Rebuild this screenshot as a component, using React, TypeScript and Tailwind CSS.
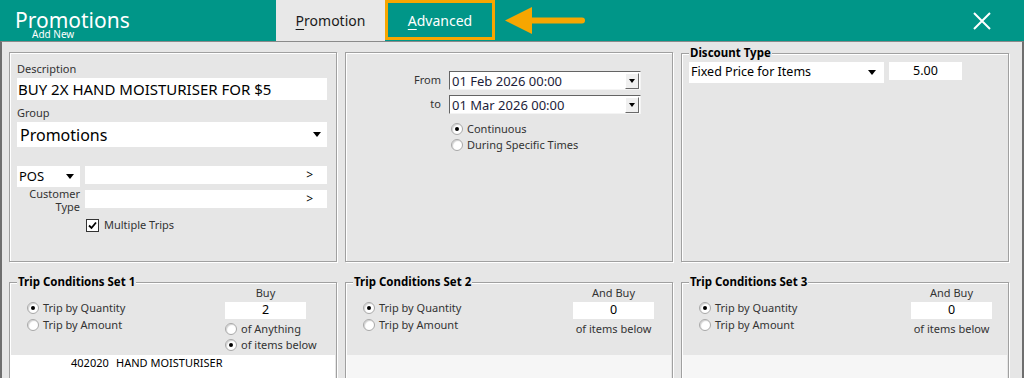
import React from 'react';

/** Classic Windows-style radio dot. */
function Radio({ on }: { on?: boolean }) {
  return (
    <span className="flex h-[12px] w-[12px] shrink-0 items-center justify-center rounded-full border border-[#a8a8a8] bg-white shadow-[inset_1px_1px_1px_rgba(0,0,0,0.18)]">
      {on && <span className="h-[4px] w-[4px] rounded-full bg-black" />}
    </span>
  );
}

function RadioRow({ on, children }: { on?: boolean; children: React.ReactNode }) {
  return (
    <div className="flex h-[16px] items-center gap-[4px] text-[11px] text-[#333]">
      <Radio on={on} />
      <span>{children}</span>
    </div>
  );
}

function Caret() {
  return <span className="h-0 w-0 border-x-[4.5px] border-t-[5px] border-x-transparent border-t-black" />;
}

function DatePicker({ value }: { value: string }) {
  return (
    <div className="flex h-[19px] w-[192px] items-center border border-t-[#646464] border-l-[#646464] border-b-[#f4f4f4] border-r-[#f4f4f4] bg-white">
      <span className="flex-1 pl-[2px] pt-[2px] text-[13px] leading-none text-[#1d1d3a]">{value}</span>
      <span className="mr-[1px] flex h-[16px] w-[14px] items-center justify-center border border-t-white border-l-white border-b-[#6a6a6a] border-r-[#6a6a6a] bg-[#f0f0f0]">
        <span className="h-0 w-0 border-x-[3.5px] border-t-[4px] border-x-transparent border-t-black" />
      </span>
    </div>
  );
}

const etched = 'border border-[#a0a0a0] shadow-[inset_1px_1px_0_#fff,1px_1px_0_#fff]';

function Legend({ children }: { children: React.ReactNode }) {
  return (
    <legend className="ml-[7px] bg-[#e6e6e6] px-[1px] text-[11.5px] font-bold leading-[14px] text-black">
      {children}
    </legend>
  );
}

function TripSet({
  n,
  buyLabel,
  buyValue,
  inputLeft,
  anything,
  items,
}: {
  n: number;
  buyLabel: string;
  buyValue: string;
  inputLeft: number;
  anything?: boolean;
  items?: string[];
}) {
  return (
    <fieldset className={`h-[120px] w-[328px] ${etched}`}>
      <Legend>Trip Conditions Set {n}</Legend>
      <div className="-mt-[3px] flex h-[66px]">
        <div className="ml-[17px] mt-[14px] w-[150px] shrink-0">
          <RadioRow on>Trip by Quantity</RadioRow>
          <div className="h-[1px]" />
          <RadioRow>Trip by Amount</RadioRow>
        </div>
        <div className="flex flex-col" style={{ marginLeft: inputLeft - 167 }}>
          <div className="w-[81px] text-center text-[11px] leading-[14px] text-[#333]">{buyLabel}</div>
          <div className="mt-[2px] flex h-[17px] w-[81px] items-center justify-center bg-white text-[12.5px] text-black">
            {buyValue}
          </div>
          <div className="mt-[2px]">
            {anything ? (
              <>
                <RadioRow>of Anything</RadioRow>
                <RadioRow on>of items below</RadioRow>
              </>
            ) : (
              <div className="flex h-[16px] w-[81px] items-center justify-center whitespace-nowrap text-[11px] text-[#333]">
                of items below
              </div>
            )}
          </div>
        </div>
      </div>
      <div className={`mx-[1px] mt-[3px] h-[40px] ${items ? 'bg-white' : 'bg-[#f6f6f6]'}`}>
        {items?.map((it) => (
          <div key={it} className="flex h-[16px] items-center pl-[60px] text-[11px] text-black">
            <span className="w-[45px]">402020</span>
            <span>{it}</span>
          </div>
        ))}
      </div>
    </fieldset>
  );
}

export default function App() {
  return (
    <div className="h-[378px] w-[1024px] overflow-hidden bg-[#e6e6e6] font-['Noto_Sans',sans-serif]">
      {/* title bar */}
      <header className="flex h-[41px] bg-[#009688] text-white">
        <div className="w-[276px] shrink-0 pl-[15px] pt-[11px]">
          <div className="text-[21px] leading-[18px]">Promotions</div>
          <div className="pl-[17px] text-[10px] leading-[10px]">Add New</div>
        </div>
        <div className="flex w-[109px] shrink-0 items-center justify-center bg-[#e8e8e8] text-[14px] text-[#1a1a1a]">
          <span>
            <span className="underline underline-offset-[3px]">P</span>romotion
          </span>
        </div>
        <div className="flex h-[40px] w-[110px] shrink-0 items-center justify-center border-[3px] border-[#f7a600] text-[14px]">
          <span>
            <span className="underline underline-offset-[3px]">A</span>dvanced
          </span>
        </div>
        <svg className="ml-[5px] mt-[6px] shrink-0" width="90" height="30" viewBox="0 0 90 30">
          <polygon points="5,14.5 32,1 32,28" fill="#f7a600" />
          <line x1="30" y1="14.5" x2="82" y2="14.5" stroke="#f7a600" strokeWidth="6" strokeLinecap="round" />
        </svg>
        <svg className="ml-auto mr-[33px] mt-[12px] shrink-0" width="18" height="18" viewBox="0 0 18 18">
          <path d="M1 1L17 17M17 1L1 17" stroke="#fff" strokeWidth="2" />
        </svg>
      </header>

      <main className="h-[337px] border-x-2 border-t border-x-[#6e6e6e] border-t-[#8a8a8a]">
        {/* upper panels */}
        <div className="flex items-end gap-[8px] pl-[7px] pt-[4px]">
          <section className={`h-[210px] w-[328px] pl-[7px] pr-[9px] pt-[8px] ${etched}`}>
            <div className="text-[11px] leading-[16px] text-[#333]">Description</div>
            <div className="mt-[1px] flex h-[22px] items-center bg-white pl-[1px] text-[15px] text-black">
              BUY 2X HAND MOISTURISER FOR $5
            </div>
            <div className="mt-[5px] text-[11px] leading-[16px] text-[#333]">Group</div>
            <div className="mt-[1px] flex h-[25px] items-center justify-between bg-white pl-[3px] pr-[6px] text-[16px] text-black">
              <span>Promotions</span>
              <Caret />
            </div>
            <div className="mt-[19px] flex items-start gap-[5px]">
              <div className="flex h-[21px] w-[63px] items-center justify-between bg-white pl-[2px] pr-[6px] text-[13px] text-black">
                <span>POS</span>
                <Caret />
              </div>
              <div className="flex h-[18px] flex-1 items-center justify-end bg-white pr-[14px] text-[12px] text-black">
                &gt;
              </div>
            </div>
            <div className="flex items-start gap-[5px]">
              <div className="w-[63px] text-right text-[11px] leading-[13px] text-[#333]">
                Customer
                <br />
                Type
              </div>
              <div className="mt-[3px] flex h-[18px] flex-1 items-center justify-end bg-white pr-[14px] text-[12px] text-black">
                &gt;
              </div>
            </div>
            <div className="ml-[69px] mt-[4px] flex items-center gap-[5px] text-[11px] text-[#333]">
              <span className="flex h-[13px] w-[13px] items-center justify-center border border-[#333] bg-white">
                <svg width="9" height="9" viewBox="0 0 9 9">
                  <path d="M1 4.5L3.5 7L8 1.5" fill="none" stroke="#000" strokeWidth="1.8" />
                </svg>
              </span>
              <span>Multiple Trips</span>
            </div>
          </section>

          <section className={`h-[210px] w-[328px] pt-[18px] ${etched}`}>
            <div className="flex items-center gap-[8px]">
              <span className="w-[95px] text-right text-[11px] text-[#333]">From</span>
              <DatePicker value="01 Feb 2026 00:00" />
            </div>
            <div className="mt-[5px] flex items-center gap-[8px]">
              <span className="w-[95px] text-right text-[11px] text-[#333]">to</span>
              <DatePicker value="01 Mar 2026 00:00" />
            </div>
            <div className="ml-[105px] mt-[7px]">
              <RadioRow on>Continuous</RadioRow>
              <RadioRow>During Specific Times</RadioRow>
            </div>
          </section>

          <fieldset className={`h-[216px] w-[328px] ${etched}`}>
            <Legend>Discount Type</Legend>
            <div className="ml-[7px] mt-[2px] flex items-start gap-[5px]">
              <div className="flex h-[21px] w-[195px] items-center justify-between bg-white pl-[2px] pr-[8px] text-[12.5px] text-black">
                <span>Fixed Price for Items</span>
                <Caret />
              </div>
              <div className="flex h-[18px] w-[73px] items-center justify-center bg-white text-[12.5px] text-black">
                5.00
              </div>
            </div>
          </fieldset>
        </div>

        {/* trip condition sets */}
        <div className="mt-[13px] flex gap-[8px] pl-[7px]">
          <TripSet n={1} buyLabel="Buy" buyValue="2" inputLeft={215} anything items={['HAND MOISTURISER']} />
          <TripSet n={2} buyLabel="And Buy" buyValue="0" inputLeft={227} />
          <TripSet n={3} buyLabel="And Buy" buyValue="0" inputLeft={229} />
        </div>
      </main>
    </div>
  );
}
